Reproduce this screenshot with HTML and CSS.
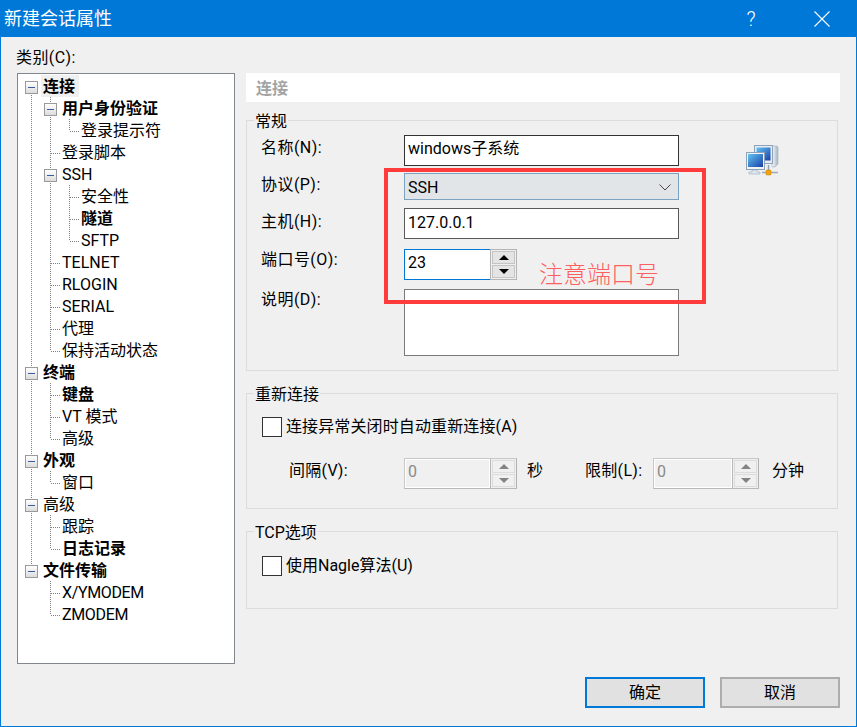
FILE: index.html
```html
<!DOCTYPE html>
<html lang="zh-CN">
<head>
<meta charset="utf-8">
<title>新建会话属性</title>
<link rel="stylesheet" href="styles.css">
</head>
<body>
<div class="window">
  <header class="titlebar">
    <span class="title">新建会话属性</span>
    <span class="help">?</span>
    <svg class="close" width="16" height="16" viewBox="0 0 16 16"><path d="M0.5 0.5L15.5 15.5M15.5 0.5L0.5 15.5" stroke="#fff" stroke-width="1.1" fill="none"/></svg>
  </header>
  <main class="content">
    <div class="category">类别(C):</div>
    <div class="panes">
      <nav class="tree">
        <div class="node"><i class="c bt"><b class="box"></b></i><span class="n sel strong">连接</span></div>
        <div class="node"><i class="c v"></i><i class="c bo"><b class="box"></b></i><span class="n strong">用户身份验证</span></div>
        <div class="node"><i class="c v"></i><i class="c v"></i><i class="c e"></i><span class="n">登录提示符</span></div>
        <div class="node"><i class="c v"></i><i class="c t"></i><span class="n">登录脚本</span></div>
        <div class="node"><i class="c v"></i><i class="c bo"><b class="box"></b></i><span class="n">SSH</span></div>
        <div class="node"><i class="c v"></i><i class="c v"></i><i class="c t"></i><span class="n">安全性</span></div>
        <div class="node"><i class="c v"></i><i class="c v"></i><i class="c t"></i><span class="n strong">隧道</span></div>
        <div class="node"><i class="c v"></i><i class="c v"></i><i class="c e"></i><span class="n">SFTP</span></div>
        <div class="node"><i class="c v"></i><i class="c t"></i><span class="n">TELNET</span></div>
        <div class="node"><i class="c v"></i><i class="c t"></i><span class="n">RLOGIN</span></div>
        <div class="node"><i class="c v"></i><i class="c t"></i><span class="n">SERIAL</span></div>
        <div class="node"><i class="c v"></i><i class="c t"></i><span class="n">代理</span></div>
        <div class="node"><i class="c v"></i><i class="c e"></i><span class="n">保持活动状态</span></div>
        <div class="node"><i class="c bo"><b class="box"></b></i><span class="n strong">终端</span></div>
        <div class="node"><i class="c v"></i><i class="c t"></i><span class="n strong">键盘</span></div>
        <div class="node"><i class="c v"></i><i class="c t"></i><span class="n">VT 模式</span></div>
        <div class="node"><i class="c v"></i><i class="c e"></i><span class="n">高级</span></div>
        <div class="node"><i class="c bo"><b class="box"></b></i><span class="n strong">外观</span></div>
        <div class="node"><i class="c v"></i><i class="c e"></i><span class="n">窗口</span></div>
        <div class="node"><i class="c bo"><b class="box"></b></i><span class="n">高级</span></div>
        <div class="node"><i class="c v"></i><i class="c t"></i><span class="n">跟踪</span></div>
        <div class="node"><i class="c v"></i><i class="c e"></i><span class="n strong">日志记录</span></div>
        <div class="node"><i class="c bu"><b class="box"></b></i><span class="n strong">文件传输</span></div>
        <div class="node"><i class="c"></i><i class="c t"></i><span class="n tight">X/YMODEM</span></div>
        <div class="node"><i class="c"></i><i class="c e"></i><span class="n tight">ZMODEM</span></div>
      </nav>
      <section class="settings">
        <div class="heading">连接</div>
        <div class="group general">
          <div class="legend">常规</div>
          <div class="general-body">
            <div class="form">
              <div class="row"><label class="lbl l-name">名称(N):</label><div class="field f-name">windows子系统</div></div>
              <div class="row r-proto"><label class="lbl l-proto">协议(P):</label>
                <div class="select">SSH<svg class="chev" width="12" height="7" viewBox="0 0 12 7"><path d="M0.5 0.5L6 6L11.5 0.5" fill="none" stroke="#444" stroke-width="1"/></svg></div></div>
              <div class="row r-host"><label class="lbl l-host">主机(H):</label><div class="field f-host">127.0.0.1</div></div>
              <div class="row r-port"><label class="lbl l-port">端口号(O):</label>
                <div class="port"><div class="port-input">23</div>
                  <div class="spin"><span class="sb"><u class="up"></u></span><span class="sb"><u class="dn"></u></span></div></div></div>
              <div class="row r-desc"><label class="lbl l-desc">说明(D):</label><div class="memo"></div></div>
            </div>
            <svg class="net" width="34" height="32" viewBox="0 0 34 32">
              <defs>
                <linearGradient id="scr" x1="0" y1="0" x2="1" y2="1"><stop offset="0" stop-color="#62c4f0"/><stop offset="1" stop-color="#1a3fa8"/></linearGradient>
                <linearGradient id="tw" x1="0" y1="0" x2="1" y2="0"><stop offset="0" stop-color="#f6f8fa"/><stop offset="1" stop-color="#a6b4c4"/></linearGradient>
              </defs>
              <path d="M27 2h5l1 1v17l-3 3h-3z" fill="url(#tw)" stroke="#a3b3c4" stroke-width=".6"/>
              <rect x="9.5" y="1.5" width="18" height="18" fill="#e6ecf2" stroke="#8fa3b8"/>
              <rect x="11.5" y="3.5" width="14" height="13" fill="url(#scr)"/>
              <rect x="1.5" y="8.5" width="18" height="17" fill="#f1f4f7" stroke="#8ea2b7"/>
              <rect x="3" y="10" width="15" height="13" fill="url(#scr)"/>
              <path d="M7 26h5v2h3v2H4v-2h3z" fill="#dfe6ee" stroke="#9fb0c2" stroke-width=".6"/>
              <path d="M17 28.5h16" stroke="#9aabbc" stroke-width="1.500"/>
              <path d="M23.500 21v6" stroke="#8ea0b3" stroke-width="1.500"/>
              <rect x="21" y="26" width="5" height="5" rx="1" fill="#f2a30f" stroke="#c47a00" stroke-width=".5"/>
            </svg>
          </div>
        </div>
        <div class="group reconnect">
          <div class="legend">重新连接</div>
          <div class="check-row c-auto"><span class="check"></span><span class="check-text t-auto">连接异常关闭时自动重新连接(A)</span></div>
          <div class="interval">
            <span class="iv-label">间隔(V):</span>
            <div class="dspin w-sec"><span class="dval">0</span><div class="dbtns"><span class="dsb"><u class="up g"></u></span><span class="dsb"><u class="dn g"></u></span></div></div>
            <span class="unit-sec">秒</span>
            <span class="lim-label">限制(L):</span>
            <div class="dspin w-min"><span class="dval">0</span><div class="dbtns"><span class="dsb"><u class="up g"></u></span><span class="dsb"><u class="dn g"></u></span></div></div>
            <span class="unit-min">分钟</span>
          </div>
        </div>
        <div class="group tcp">
          <div class="legend">TCP选项</div>
          <div class="check-row c-nagle"><span class="check"></span><span class="check-text">使用Nagle算法(U)</span></div>
        </div>
      </section>
    </div>
    <footer class="actions">
      <button class="btn primary">确定</button>
      <button class="btn">取消</button>
    </footer>
  </main>
  <div class="mark"></div>
  <div class="note">注意端口号</div>
</div>
</body>
</html>
```
FILE: styles.css
```css
* { box-sizing: border-box; }
html, body { margin: 0; padding: 0; }
body {
  width: 857px; height: 727px; overflow: hidden; background: #f0f0f0;
  font-family: Roboto, "Noto Sans CJK SC", sans-serif;
  font-size: 16px; line-height: 22px; color: #000;
}
.window {
  position: relative; width: 857px; height: 727px;
  border: 1px solid #0078d7; background: #f0f0f0;
  display: flex; flex-direction: column;
}
.titlebar {
  height: 36px; flex: none; background: #0078d7; color: #fff;
  display: flex; align-items: center; padding-left: 3px;
}
.title { font-size: 18px; line-height: 36px; flex: 1; }
.help { font-size: 20px; line-height: 36px; font-weight: 300; width: 12px; text-align: center; margin-right: 57px; }
.close { margin-right: 26px; }
.content { flex: 1; padding: 10px 16px 18px 16px; display: flex; flex-direction: column; }
.category { height: 20px; line-height: 22px; margin-bottom: 6px; margin-left: -1px; letter-spacing: .4px; }
.panes { display: flex; gap: 11px; height: 591px; }
.tree {
  width: 218px; flex: none; background: #fff; border: 1px solid #82878f;
  padding: 1px 0 0 6px;
}
.node { display: flex; height: 22px; }
.c {
  display: block; position: relative; width: 19px; height: 22px; flex: none;
  --dots: repeating-linear-gradient(to bottom, #808080 0 1px, transparent 1px 2px);
  --hdots: repeating-linear-gradient(to right, #808080 0 1px, transparent 1px 2px);
}
.v { background: var(--dots) 7px 0 / 1px 100% no-repeat; }
.t { background: var(--hdots) 8px 12px / 9px 1px no-repeat, var(--dots) 7px 0 / 1px 100% no-repeat; }
.e { background: var(--hdots) 8px 12px / 9px 1px no-repeat, var(--dots) 7px 0 / 1px 12px no-repeat; }
.bo { background: var(--dots) 7px 0 / 1px 100% no-repeat; }
.bt { background: var(--dots) 7px 12px / 1px 10px no-repeat; }
.bu { background: var(--dots) 7px 0 / 1px 6px no-repeat; }
.box {
  display: block; position: absolute; left: 1px; top: 6px; width: 13px; height: 13px;
  border: 1px solid #9a9a9a; background: linear-gradient(#fff, #dcdcdc);
}
.box::after {
  content: ""; position: absolute; left: 2px; top: 5px; width: 7px; height: 1px; background: #3c5a9e;
}
.n { padding: 0; white-space: nowrap; height: 22px; line-height: 24px; }
.tight { letter-spacing: -.35px; }
.strong { font-weight: 700; }
.sel { background: #f0f0f0; margin-left: -2px; padding: 0 2px; min-width: 38px; }
.settings { flex: 1; display: flex; flex-direction: column; }
.heading {
  height: 29px; line-height: 31px; background: #fff; color: #a3a3a3;
  font-weight: 700; padding-left: 10px; margin-bottom: 18px;
}
.group { border: 1px solid #dcdcdc; margin-right: 2px; }
.legend {
  width: fit-content; height: 20px; line-height: 22px; margin: -10px 0 0 7px;
  padding: 0 1px; background: #f0f0f0;
}
.general { height: 251px; margin-bottom: 22px; }
.general-body { display: flex; padding: 4px 0 0 14px; }
.form { width: 418px; }
.row { display: flex; }
.lbl { width: 143px; flex: none; display: block; height: 22px; line-height: 22px; letter-spacing: .45px; }
.l-name { margin-top: 2px; }
.l-proto { margin-top: 1px; }
.l-host { margin-top: 3px; }
.l-port, .l-desc { margin-top: 0; }
.r-proto { margin-top: 7px; }
.r-host { margin-top: 8px; }
.r-port { margin-top: 10px; }
.r-desc { margin-top: 9px; }
.field {
  width: 275px; height: 31px; background: #fff; padding: 2px 3px 0 3px; line-height: 22px;
}
.f-name { border: 1px solid #333; }
.f-host { border: 1px solid #5a5a5a; padding-top: 3px; }
.select {
  position: relative; width: 275px; height: 27px; background: #e2e5e8; border: 1px solid #7ba2c0;
  padding: 2px 3px 0 3px; line-height: 23px;
}
.chev { position: absolute; right: 7px; top: 10px; }
.port { display: flex; width: 113px; height: 31px; }
.port-input {
  width: 86px; background: #fff; border: 1px solid #0078d7; border-right: 0;
  padding: 1px 3px 0 3px; line-height: 23px;
}
.spin {
  width: 27px; border: 1px solid #b4b4b4; padding: 1px 1px; display: flex; flex-direction: column; gap: 1px; background: #f0f0f0;
}
.sb { flex: 1; background: #e4e4e4; border: 1px solid #c4c4c4; display: flex; align-items: center; justify-content: center; }
.up, .dn { display: block; width: 0; height: 0; border-left: 5px solid transparent; border-right: 5px solid transparent; }
.up { border-bottom: 5px solid #000; }
.dn { border-top: 5px solid #000; }
.up.g { border-bottom-color: #838383; }
.dn.g { border-top-color: #838383; }
.memo { width: 275px; height: 67px; background: #fff; border: 1px solid #7a7a7a; }
.net { margin: 9px 0 0 66px; flex: none; }
.reconnect { height: 116px; margin-bottom: 22px; }
.check-row { display: flex; align-items: center; height: 22px; padding-left: 15px; }
.check { width: 20px; height: 20px; flex: none; background: #fff; border: 1px solid #333; }
.check-text { margin-left: 4px; white-space: nowrap; }
.t-auto { letter-spacing: .12px; }
.c-auto { margin-top: 12px; }
.c-nagle { margin-top: 13px; }
.interval { display: flex; align-items: center; height: 31px; margin-top: 20px; padding-left: 42px; }
.iv-label, .unit-sec, .lim-label, .unit-min { margin-bottom: 6px; }
.iv-label { width: 115px; flex: none; letter-spacing: .3px; }
.dspin { display: flex; height: 31px; flex: none; border: 1px solid #c8c8c8; border-right-color: #b0b0b0; border-bottom-color: #b8b8b8; }
.w-sec { width: 113px; }
.w-min { width: 106px; }
.dval { flex: 1; color: #8a8a8a; padding-left: 3px; line-height: 25px; height: 29px; box-shadow: inset -1px -1px 0 #fff, inset 1px 1px 0 #fff; }
.dbtns { width: 26px; display: flex; flex-direction: column; gap: 1px; padding: 1px; border-left: 1px solid #b8b8b8; }
.dsb { flex: 1; border: 1px solid #dcdcdc; display: flex; align-items: center; justify-content: center; }
.unit-sec { margin-left: 10px; width: 58px; flex: none; }
.lim-label { width: 68px; flex: none; letter-spacing: .3px; }
.unit-min { margin-left: 13px; }
.tcp { height: 78px; }
.actions { display: flex; justify-content: flex-end; gap: 15px; margin-top: 13px; }
.btn {
  width: 120px; height: 31px; font: inherit; line-height: 26px; padding: 0; background: #e1e1e1;
  border: 2px solid #adadad; color: #000;
}
.primary { border-color: #0078d7; }
.mark { position: absolute; left: 383px; top: 167px; width: 322px; height: 136px; border: 4px solid #ff3b3b; }
.note { position: absolute; left: 538px; top: 256px; font-size: 24px; line-height: 36px; color: #ff5f5f; font-weight: 300; white-space: nowrap; }
```
